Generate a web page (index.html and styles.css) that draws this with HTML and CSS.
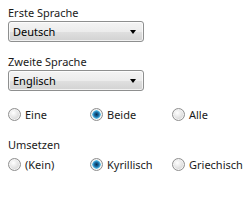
FILE: index.html
```html
<!DOCTYPE html>
<html lang="de">
<head>
    <meta charset="UTF-8">
    <title>Sprachen</title>
    <link rel="stylesheet" href="styles.css">
</head>
<body>
    <div class="panel">
        <div class="field">
            <div class="field-label">Erste Sprache</div>
            <div class="combo">
                <select>
                    <option>Deutsch</option>
                </select>
            </div>
        </div>
        <div class="field">
            <div class="field-label">Zweite Sprache</div>
            <div class="combo">
                <select>
                    <option>Englisch</option>
                </select>
            </div>
        </div>
        <div class="radio-row first-row">
            <label class="radio"><input type="radio" name="mode"> Eine</label>
            <label class="radio"><input type="radio" name="mode" checked> Beide</label>
            <label class="radio"><input type="radio" name="mode"> Alle</label>
        </div>
        <div class="field-label group-label">Umsetzen</div>
        <div class="radio-row">
            <label class="radio"><input type="radio" name="translit"> (Kein)</label>
            <label class="radio"><input type="radio" name="translit" checked> Kyrillisch</label>
            <label class="radio"><input type="radio" name="translit"> Griechisch</label>
        </div>
    </div>
</body>
</html>
```

FILE: styles.css
```css
body {
    margin: 0;
    background: #fff;
    font-family: "Noto Sans", "Open Sans", sans-serif;
    font-size: 11px;
    color: #1a1a1a;
}

.panel {
    padding: 5px 8px 0 8px;
}

.field {
    margin-bottom: 12px;
}

.field-label {
    line-height: 15px;
    margin-bottom: 1px;
}

.combo {
    position: relative;
    width: 136px;
}

.combo select {
    appearance: none;
    -webkit-appearance: none;
    display: block;
    width: 136px;
    height: 21px;
    margin: 0;
    padding: 0 0 0 4px;
    font-family: inherit;
    font-size: 11px;
    color: #000;
    border: 1px solid #8e8f8f;
    border-radius: 3px;
    background: linear-gradient(#f4f4f4 0%, #ececec 50%, #e0e0e0 51%, #d2d2d2 100%);
    box-shadow: inset 0 0 0 1px rgba(255, 255, 255, 0.7);
}

.combo::after {
    content: "";
    position: absolute;
    right: 8px;
    top: 9px;
    border-left: 3.5px solid transparent;
    border-right: 3.5px solid transparent;
    border-top: 4px solid #000;
    pointer-events: none;
}

.radio-row {
    display: grid;
    grid-template-columns: 82px 82px 1fr;
    line-height: 15px;
}

.first-row {
    margin-top: 16px;
}

.group-label {
    margin-top: 15px;
    margin-bottom: 5px;
}

.radio {
    display: flex;
    align-items: center;
    gap: 4px;
    white-space: nowrap;
}

.radio input {
    appearance: none;
    -webkit-appearance: none;
    width: 13px;
    height: 13px;
    margin: 0;
    border-radius: 50%;
    border: 1px solid #8f8f8f;
    background: radial-gradient(circle at 40% 35%, #ffffff 0%, #e6e6e6 45%, #c6c6c6 100%);
    box-shadow: inset 0 0 0 1px #f4f4f4;
    flex: none;
}

.radio input:checked {
    background: radial-gradient(circle at 50% 50%, #0b2f4d 0%, #1a6fa8 30%, #5cc2ea 52%, #e9e9e9 56%, #d0d0d0 100%);
}
```
